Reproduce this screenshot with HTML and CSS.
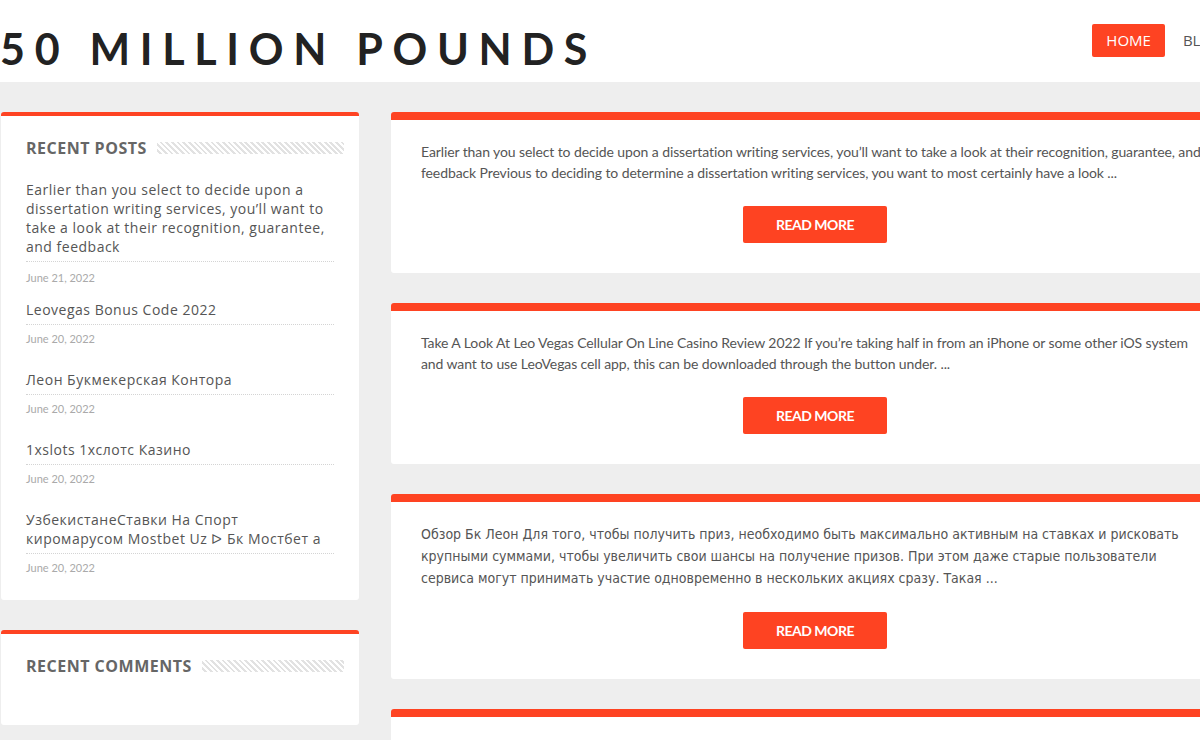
FILE: index.html
```html
<!DOCTYPE html>
<html lang="en">
<head>
<meta charset="utf-8">
<title>50 Million Pounds</title>
<link rel="stylesheet" href="styles.css">
</head>
<body>
<div class="page">
  <header class="site-header">
    <h1 class="site-title">50 MILLION POUNDS</h1>
    <nav class="nav">
      <a class="nav-item active" href="#">HOME</a>
      <a class="nav-item" href="#">BLOG</a>
    </nav>
  </header>
  <div class="layout">
    <aside class="sidebar">
      <section class="widget">
        <h2 class="widget-title"><span>RECENT POSTS</span><i class="stripes"></i></h2>
        <ul class="posts">
          <li class="first">
            <a class="post-title" href="#">Earlier than you select to decide upon a dissertation writing services, you’ll want to take a look at their recognition, guarantee, and feedback</a>
            <span class="post-date">June 21, 2022</span>
          </li>
          <li>
            <a class="post-title" href="#">Leovegas Bonus Code 2022</a>
            <span class="post-date">June 20, 2022</span>
          </li>
          <li>
            <a class="post-title" href="#">Леон Букмекерская Контора</a>
            <span class="post-date">June 20, 2022</span>
          </li>
          <li>
            <a class="post-title" href="#">1xslots 1хслотс Казино</a>
            <span class="post-date">June 20, 2022</span>
          </li>
          <li>
            <a class="post-title" href="#">УзбекистанеСтавки На Спорт киромарусом Mostbet Uz ᐅ Бк Мостбет а</a>
            <span class="post-date">June 20, 2022</span>
          </li>
        </ul>
      </section>
      <section class="widget widget-comments">
        <h2 class="widget-title"><span>RECENT COMMENTS</span><i class="stripes"></i></h2>
      </section>
    </aside>
    <main class="main">
      <article class="card">
        <p class="excerpt">Earlier than you select to decide upon a dissertation writing services, you’ll want to take a look at their recognition, guarantee, and feedback Previous to deciding to determine a dissertation writing services, you want to most certainly have a look ...</p>
        <a class="btn" href="#">READ MORE</a>
      </article>
      <article class="card">
        <p class="excerpt">Take A Look At Leo Vegas Cellular On Line Casino Review 2022 If you’re taking half in from an iPhone or some other iOS system and want to use LeoVegas cell app, this can be downloaded through the button under. ...</p>
        <a class="btn" href="#">READ MORE</a>
      </article>
      <article class="card">
        <p class="excerpt cyr">Обзор Бк Леон Для того, чтобы получить приз, необходимо быть максимально активным на ставках и рисковать крупными суммами, чтобы увеличить свои шансы на получение призов. При этом даже старые пользователи сервиса могут принимать участие одновременно в нескольких акциях сразу. Такая ...</p>
        <a class="btn" href="#">READ MORE</a>
      </article>
      <article class="card">
        <p class="excerpt">Leovegas Bonus Code 2022</p>
        <a class="btn" href="#">READ MORE</a>
      </article>
    </main>
  </div>
</div>
</body>
</html>
```
FILE: styles.css
```css
html, body {
  margin: 0;
  padding: 0;
  overflow: hidden;
  background: #eeeeee;
}
body {
  font-family: Lato, "Liberation Sans", sans-serif;
  color: #555;
}
a { text-decoration: none; color: inherit; }

.page {
  width: 1240px;
}

.site-header {
  background: #fff;
  height: 82px;
  display: flex;
  align-items: center;
  justify-content: space-between;
}
.site-title {
  margin: 0;
  margin-top: 14px;
  font-family: Lato, sans-serif;
  font-weight: 700;
  font-size: 43px;
  letter-spacing: 9.7px;
  color: #222;
  line-height: 1;
}
.nav {
  display: flex;
  align-items: center;
  gap: 4px;
  margin-top: -1px;
  padding-right: 3px;
}
.nav-item {
  font-family: "Open Sans", sans-serif;
  font-size: 15px;
  color: #555;
  padding: 0 14px;
  height: 33px;
  line-height: 33px;
  border-radius: 2px;
}
.nav-item.active {
  background: #fe4322;
  color: #fff;
}

.layout {
  display: grid;
  grid-template-columns: 358px 848px;
  column-gap: 32px;
  align-items: start;
  padding: 30px 0 0 1px;
}

.sidebar {
  display: flex;
  flex-direction: column;
  gap: 30px;
}
.widget {
  background: #fff;
  border-top: 4px solid #fe4322;
  border-radius: 3px;
  padding: 22px 15px 1px 25px;
}
.widget-comments {
  padding-bottom: 49px;
}
.widget-title {
  margin: 0;
  display: flex;
  align-items: center;
  gap: 10px;
  font-family: "Open Sans", sans-serif;
  font-weight: 700;
  font-size: 16px;
  line-height: 20px;
  color: #666;
  letter-spacing: 0.5px;
}
.stripes {
  flex: 1;
  height: 12px;
  background: repeating-linear-gradient(45deg, #fff 0 2px, #e2e2e2 2px 4px);
}
.posts {
  list-style: none;
  margin: 22px 0 0;
  padding: 0 10px 0 0;
}
.posts li {
  margin-bottom: 23px;
}
.posts li.first {
  margin-bottom: 14px;
}
.posts li.first .post-date {
  margin-top: 8px;
}
.post-title {
  display: block;
  font-family: "Open Sans", sans-serif;
  font-size: 14px;
  line-height: 19px;
  letter-spacing: 0.5px;
  color: #555;
  padding-bottom: 5px;
  border-bottom: 1px dotted #d4d4d4;
}
.post-date {
  display: block;
  margin-top: 6px;
  font-family: Lato, sans-serif;
  font-size: 11px;
  line-height: 16px;
  color: #aaa;
}

.main {
  display: flex;
  flex-direction: column;
  gap: 30px;
}
.card {
  background: #fff;
  border-top: 8px solid #fe4322;
  border-radius: 3px;
  padding: 21px 30px 30px;
  display: flex;
  flex-direction: column;
  align-items: center;
}
.excerpt {
  margin: 0 -4px 0 0;
  align-self: stretch;
  font-family: Lato, sans-serif;
  font-size: 14px;
  line-height: 21px;
  letter-spacing: -0.1px;
  color: #555;
}
.excerpt.cyr {
  font-family: "DejaVu Sans Condensed", "Liberation Sans Narrow", Lato, sans-serif;
  font-stretch: condensed;
  line-height: 22px;
  letter-spacing: 0;
  margin: 0;
}
.btn {
  margin-top: 23px;
  width: 144px;
  height: 37px;
  line-height: 37px;
  text-align: center;
  background: #fe4322;
  color: #fff;
  font-family: Lato, sans-serif;
  font-weight: 700;
  font-size: 14px;
  letter-spacing: -0.5px;
  border-radius: 2px;
}
```
